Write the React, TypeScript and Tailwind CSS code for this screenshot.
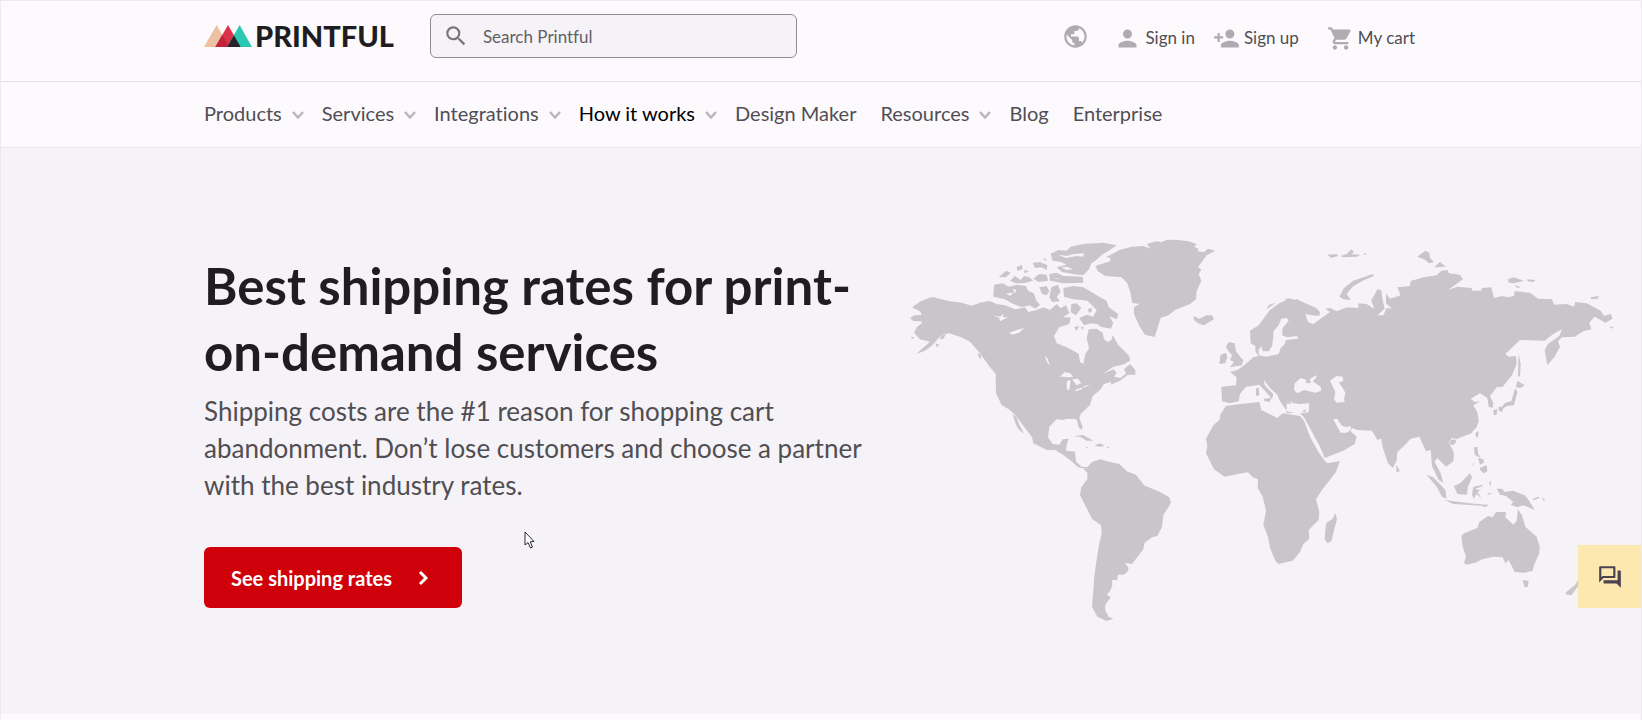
import { useState } from "react";
import {
  MdOutlineQuestionAnswer,
  MdPerson,
  MdPersonAdd,
  MdPublic,
  MdSearch,
  MdShoppingCart,
} from "react-icons/md";

const navItems = [
  { label: "Products", menu: true },
  { label: "Services", menu: true },
  { label: "Integrations", menu: true },
  { label: "How it works", menu: true, active: true },
  { label: "Design Maker", menu: false },
  { label: "Resources", menu: true },
  { label: "Blog", menu: false },
  { label: "Enterprise", menu: false },
];

function Logo() {
  return (
    <a href="#" className="flex items-center gap-[3px] text-[#1f1d21]">
      <svg viewBox="0 0 144 66" className="h-[22px] w-12" aria-hidden="true">
        <path d="M0 66 L38 0 L76 66Z" fill="#ecc0a0" />
        <path d="M34 66 L72 0 L110 66Z" fill="#dc3348" />
        <path d="M34 66 L55 29 L76 66Z" fill="#c4223a" />
        <path d="M69 66 L107 0 L144 66Z" fill="#2bc9b2" />
        <path d="M69 66 L90 31 L110 66Z" fill="#29242b" />
      </svg>
      <span className="text-[29px] leading-8 font-black">PRINTFUL</span>
    </a>
  );
}

function SearchBox() {
  const [query, setQuery] = useState("");

  return (
    <div className="flex h-11 w-[367px] items-center rounded-md border border-[#8f8c92] bg-[#f5f3f7] pl-3">
      <label htmlFor="search">
        <MdSearch className="size-[26px] text-[#77747a]" />
      </label>
      <input
        id="search"
        type="text"
        aria-label="Search Printful"
        placeholder="Search Printful"
        className="ml-[14px] h-full min-w-0 flex-1 bg-transparent text-[17px] text-[#4c4a4f] outline-none placeholder:text-[#626065]"
        value={query}
        onChange={(e) => setQuery(e.target.value)}
      />
    </div>
  );
}

function AccountLinks() {
  return (
    <div className="mr-[23px] flex items-center text-[17px] text-[#504e53]">
      <button type="button" aria-label="Language" className="mr-[25px] mb-1">
        <MdPublic className="size-[27px] text-[#aeacb0]" />
      </button>
      <a href="#" className="mr-[18px] flex items-center gap-1">
        <MdPerson className="size-[27px] text-[#aeacb0]" />
        Sign in
      </a>
      <a href="#" className="mr-[28px] flex items-center gap-1">
        <MdPersonAdd className="size-[27px] text-[#aeacb0]" />
        Sign up
      </a>
      <a href="#" className="flex items-center gap-1">
        <MdShoppingCart className="size-[27px] text-[#aeacb0]" />
        My cart
      </a>
    </div>
  );
}

function WorldMap() {
  return (
    <svg
      viewBox="0 0 2160 1200"
      className="w-full"
      fill="#c8c6ca"
      role="img"
      aria-label="World map"
    >
      {/* North America */}
      <g>
        <path d="M88 203 L100 201 L120 207 L150 214 L185 218 L215 227 L240 218 L268 213 L290 222 L315 226 L345 238 L375 232 L385 246 L410 240 L430 232 L450 240 L470 222 L482 235 L498 225 L508 250 L488 262 L512 262 L508 282 L478 292 L462 318 L470 340 L500 352 L520 362 L536 372 L540 396 L550 402 L556 372 L567 355 L560 325 L566 298 L590 296 L608 308 L612 328 L624 336 L634 330 L638 316 L655 345 L688 378 L690 392 L672 403 L640 410 L608 432 L640 418 L650 428 L642 440 L662 444 L678 430 L672 418 L690 402 L706 420 L706 434 L684 434 L660 452 L632 464 L634 456 L612 462 L600 480 L578 498 L570 525 L542 552 L538 565 L548 590 L544 600 L536 592 L530 568 L500 566 L490 570 L470 568 L448 590 L444 622 L458 642 L478 644 L488 628 L506 626 L500 645 L498 662 L525 665 L528 695 L545 710 L562 712 L575 700 L600 690 L580 720 L556 716 L535 712 L510 690 L490 675 L465 660 L440 660 L400 640 L396 622 L350 560 L330 540 L305 525 L288 490 L287 432 L265 405 L240 370 L210 335 L180 320 L148 310 L130 312 L112 328 L95 348 L75 362 L48 372 L90 335 L60 328 L42 308 L50 292 L66 280 L64 274 L40 273 L30 265 L42 256 L64 255 L62 245 L36 232 L60 215Z" />
        <path d="M338 553 L350 562 L358 584 L373 612 L354 596 L346 578Z M264 402 L284 408 L298 428 L284 424Z M234 368 L244 376 L242 388 L236 380Z M106 340 L118 344 L110 352Z M32 320 L44 322 L36 327Z M128 314 L138 312 L130 326 L118 328Z" />
        <path d="M282 164 L308 160 L326 170 L350 164 L378 168 L384 182 L402 190 L408 210 L420 225 L406 236 L388 226 L366 232 L340 222 L314 208 L280 200Z" />
        <path d="M296 142 L318 122 L332 128 L318 142Z M330 152 L345 138 L362 150 L372 138 L388 142 L400 152 L372 160 L348 160Z M350 112 L366 104 L368 118 L352 122Z M398 98 L420 96 L442 106 L440 120 L425 112 L405 114Z M418 132 L440 134 L444 152 L416 156 L400 146Z M428 84 L440 88 L436 93Z M372 120 L388 124 L374 130Z" />
        <path d="M418 172 L440 168 L448 184 L440 196 L426 192Z M454 172 L474 164 L482 186 L470 200 L480 214 L456 216 L448 200Z" />
        <path d="M452 72 L475 60 L500 62 L512 50 L550 42 L610 38 L650 46 L630 60 L606 74 L584 94 L574 100 L568 116 L550 136 L520 132 L486 126 L470 112 L500 104 L484 96 L458 92Z" />
        <path d="M448 132 L470 128 L490 138 L548 140 L550 158 L490 160 L450 152Z" />
        <path d="M490 174 L520 168 L550 172 L578 188 L600 202 L620 212 L626 232 L655 252 L650 268 L628 258 L640 280 L632 296 L602 290 L576 266 L590 240 L562 212 L520 208 L492 200Z" />
        <path d="M514 222 L530 220 L544 234 L528 256 L512 246Z M564 236 L576 234 L574 246 L566 248Z M538 264 L560 254 L584 262 L600 284 L576 280 L552 286Z M522 292 L538 288 L530 302Z M542 290 L552 292 L548 300Z" />
        <path d="M522 620 L548 614 L580 632 L560 632 L540 620Z M584 646 L600 640 L614 648 L596 650Z M556 650 L566 652 L560 655Z M620 650 L630 652 L622 655Z" />
        <g fill="#f5f3f7">
          <path d="M280 256 L300 260 L312 250 L308 262 L324 262 L300 274 L298 264Z M328 308 L350 300 L372 294 L358 308 L336 314Z M434 378 L442 384 L450 408 L442 398Z" />
          <path d="M480 440 L494 426 L510 430 L520 440 L504 442 L492 440Z M504 450 L512 452 L508 480 L500 478 L500 460Z M516 448 L534 446 L544 460 L530 466Z M524 480 L548 472 L546 478 L528 484Z M546 470 L570 464 L556 472Z" />
          <path d="M474 74 L500 78 L520 72 L552 70 L550 80 L530 78 L498 84Z M484 112 L500 110 L520 118 L500 120Z M460 144 L480 146 L474 148Z M338 176 L350 180 L344 190Z M318 190 L340 188 L330 198Z" />
        </g>
      </g>

      {/* Greenland, Iceland */}
      <g transform="translate(480 0)">
        <path d="M106 108 L150 94 L152 84 L138 82 L178 60 L215 50 L250 48 L272 56 L260 42 L290 34 L304 37 L320 30 L345 29 L382 33 L410 42 L402 50 L416 56 L412 64 L432 66 L444 56 L466 62 L440 76 L424 98 L414 110 L424 120 L416 132 L424 152 L410 184 L408 208 L390 222 L345 240 L326 256 L302 264 L284 321 L255 314 L238 288 L222 252 L222 232 L238 222 L216 218 L212 190 L202 160 L185 142 L136 138 L114 124Z" />
        <path d="M400 258 L418 266 L440 256 L456 256 L462 268 L432 286 L414 280 L402 270Z" />
      </g>

      {/* South America */}
      <path
        transform="translate(480 510)"
        d="M80 205 L95 187 L120 178 L150 186 L178 192 L200 214 L228 224 L252 256 L300 276 L328 292 L333 308 L310 346 L306 380 L292 408 L276 412 L254 428 L250 448 L216 492 L194 488 L206 504 L202 516 L190 524 L174 524 L172 540 L156 540 L157 556 L150 574 L140 584 L152 592 L136 614 L136 632 L146 650 L160 656 L140 663 L112 650 L96 620 L104 520 L116 440 L125 400 L123 376 L96 356 L60 286 L64 262 L82 238 L82 218 L70 206Z"
      />

      {/* Africa, Madagascar */}
      <g transform="translate(870 480)">
        <path d="M92 72 L108 48 L150 42 L208 36 L214 60 L262 84 L278 70 L330 78 L342 92 L360 140 L384 184 L404 212 L412 220 L450 213 L438 246 L396 300 L378 328 L388 366 L386 390 L356 420 L358 446 L340 462 L330 486 L308 512 L266 522 L256 512 L240 474 L234 440 L220 404 L228 362 L218 320 L203 294 L204 268 L188 262 L174 247 L140 253 L104 260 L72 238 L48 190 L52 168 L48 146 L70 106 L88 90Z" />
        <path d="M436 370 L441 386 L424 454 L412 460 L404 446 L408 400 L428 386Z" />
      </g>

      {/* Europe and western Russia */}
      <g transform="translate(870 30)">
        <path d="M94 440 L138 436 L140 412 L120 396 L142 390 L160 378 L190 352 L205 348 L196 334 L196 318 L182 310 L180 272 L206 256 L240 210 L270 188 L300 176 L330 182 L378 204 L390 216 L388 228 L366 226 L346 222 L354 246 L370 252 L400 230 L420 216 L406 206 L420 204 L440 214 L470 202 L505 204 L505 190 L530 192 L552 206 L544 180 L556 160 L562 148 L574 150 L578 180 L584 206 L562 226 L580 226 L590 204 L606 206 L588 190 L588 160 L600 176 L632 166 L622 142 L660 138 L664 122 L690 116 L690 560 L470 540 L340 520 L356 516 L358 490 L330 492 L310 490 L300 482 L304 492 L290 490 L290 512 L268 480 L262 464 L240 444 L222 420 L224 436 L250 462 L246 478 L230 458 L208 434 L168 440 L150 462 L146 484 L120 490 L96 484Z" />
        <path d="M116 306 L134 310 L138 334 L152 352 L160 360 L156 376 L120 382 L132 366 L120 360 L126 346 L114 332 L108 320Z M92 344 L108 338 L112 350 L106 370 L88 372Z M222 476 L244 474 L238 486 L222 482Z M198 446 L206 442 L208 466 L198 468Z M286 514 L314 518 L290 520Z M336 514 L350 508 L344 518Z" />
        <path d="M448 170 L462 144 L490 122 L548 102 L552 108 L518 122 L488 140 L470 162 L482 180 L460 178Z" />
        <path d="M412 44 L440 42 L444 48 L424 54Z M452 48 L470 42 L484 28 L492 36 L484 42 L510 44 L502 50 L460 52Z M520 42 L530 38 L526 46Z M228 206 L238 194 L256 188 L236 204Z M284 178 L302 174 L292 184Z M306 182 L324 176 L326 188 L312 188Z" />
        <g fill="#f5f3f7">
          <path d="M274 236 L290 234 L296 242 L278 264 L276 286 L292 292 L322 288 L324 296 L288 300 L284 312 L272 324 L266 342 L230 350 L206 346 L206 330 L214 318 L218 334 L236 334 L246 318 L250 292 L250 274 L266 256Z" />
          <path d="M312 450 L314 430 L332 414 L350 420 L346 428 L362 430 L360 416 L378 406 L380 412 L368 424 L392 440 L394 452 L376 458 L342 450 L322 460Z" />
          <path d="M420 422 L440 408 L458 410 L460 422 L446 428 L456 440 L466 458 L462 478 L464 486 L440 488 L432 478 L436 456Z" />
        </g>
      </g>

      {/* Siberia and the Far East */}
      <g transform="translate(1440 30)">
        <path d="M60 160 L70 144 L90 140 L92 124 L130 112 L170 106 L184 92 L204 90 L206 100 L240 104 L249 118 L204 150 L232 140 L274 144 L278 152 L304 152 L306 144 L334 142 L342 174 L366 168 L384 172 L402 168 L404 154 L450 158 L474 176 L516 178 L522 194 L560 192 L582 200 L586 186 L620 190 L662 212 L672 228 L692 222 L698 236 L676 248 L644 230 L628 248 L634 268 L610 274 L584 290 L546 292 L534 304 L540 320 L524 350 L502 376 L494 330 L504 312 L538 288 L546 268 L520 282 L494 302 L420 300 L376 342 L386 350 L408 348 L410 372 L396 406 L368 440 L350 442 L330 468 L340 490 L338 504 L326 500 L322 474 L300 460 L272 476 L284 486 L300 484 L280 496 L292 516 L296 544 L274 580 L230 596 L150 565 L60 555Z" />
        <path d="M112 50 L136 32 L148 38 L150 54 L162 66 L148 70 L132 58Z M162 82 L180 66 L198 80Z M384 118 L400 112 L432 122 L402 130 L386 128Z M440 118 L466 120 L460 126 L444 124Z M404 134 L422 142 L412 144Z M632 172 L656 168 L654 176 L634 178Z M686 260 L700 260 L700 266Z" />
        <path d="M416 340 L422 372 L420 408 L414 410Z M412 422 L434 436 L422 444 L408 442Z M406 444 L412 456 L402 496 L380 498 L360 512 L362 504 L376 488 L394 484 L400 462Z M340 510 L352 508 L350 524 L342 526Z M356 500 L372 500 L366 516 L356 512Z M286 580 L296 572 L294 592 L288 590Z" />
      </g>

      {/* South and south-east Asia */}
      <g transform="translate(1260 420)">
        <path d="M-60 130 L465 130 L476 152 L470 172 L452 190 L410 206 L398 204 L386 214 L402 250 L400 274 L378 290 L352 264 L344 276 L362 310 L370 338 L356 330 L336 288 L332 240 L318 244 L298 200 L272 206 L250 230 L232 246 L230 272 L218 294 L204 280 L188 232 L184 206 L172 210 L156 182 L112 180 L96 174 L92 184 L110 200 L104 222 L70 242 L14 264 L0 230 L-48 142Z" />
        <path d="M228 284 L240 302 L230 308Z M388 212 L404 208 L410 214 L400 226 L390 222Z M320 314 L340 322 L376 360 L380 386 L366 380 L350 350Z M374 390 L400 394 L450 400 L500 404 L496 408 L400 402Z M402 348 L420 340 L450 310 L456 322 L444 350 L440 374 L412 372Z" />
        <path d="M460 350 L490 344 L484 350 L466 356 L482 362 L472 366 L484 384 L468 372 L462 386 L456 374Z M462 232 L472 230 L474 250 L482 264 L464 254Z M474 264 L490 268 L492 278 L480 284Z M480 294 L500 286 L502 304 L492 310 L480 300Z M464 276 L452 294 L458 282Z M508 336 L514 334 L510 352Z M502 370 L520 370 L504 374Z" />
        <path
          d="M40 148 L52 146 L64 166 L78 172 L92 168 L92 180 L80 188 L62 188 L52 170Z"
          fill="#f5f3f7"
        />
      </g>

      {/* Oceania */}
      <g transform="translate(1470 510)">
        <path d="M214 408 L222 400 L262 384 L268 366 L294 348 L308 352 L318 336 L348 336 L346 352 L370 374 L380 362 L384 328 L396 346 L406 380 L440 410 L449 440 L448 460 L432 496 L428 512 L404 518 L374 516 L364 496 L356 480 L346 490 L338 472 L310 470 L276 478 L256 488 L228 494 L222 488 L228 470 L218 440Z" />
        <path d="M398 540 L416 542 L414 560 L404 562Z M526 578 L556 554 L568 534 L580 540 L560 564 L544 586 L530 584Z M320 266 L338 266 L342 276 L370 272 L404 286 L416 300 L434 330 L400 316 L382 322 L362 314 L370 306 L348 288 L330 284Z M426 298 L446 290 L448 294 L432 300Z M456 292 L466 300 L460 302Z M276 320 L296 312 L290 320Z" />
      </g>
    </svg>
  );
}

function Cursor() {
  return (
    <svg
      viewBox="0 0 12 18"
      className="absolute top-[383px] left-[523px] h-[18px] w-3"
      aria-hidden="true"
    >
      <path
        d="M1 1 L1 14 L4 11.5 L6.5 17 L8.5 16 L6.2 10.8 L10 10.5Z"
        fill="white"
        stroke="#2b292d"
      />
    </svg>
  );
}

export default function App() {
  return (
    <div className="min-h-screen border-x border-t border-[#eceaee] bg-[#fdfafe] font-[Lato,'Open_Sans',sans-serif] [font-variant-ligatures:none]">
      <header>
        <div className="border-b border-[#e3e1e5]">
          <div className="mx-auto flex h-20 max-w-[1234px] items-start pt-[13px]">
            <div className="mr-9 flex h-11 items-center">
              <Logo />
            </div>
            <SearchBox />
            <div className="ml-auto flex h-12 items-center">
              <AccountLinks />
            </div>
          </div>
        </div>
        <nav className="border-b border-[#e8e6ea]">
          <ul className="mx-auto flex h-[65px] max-w-[1234px] items-center pb-1 text-[20px] text-[#504e53]">
            {navItems.map((item) => (
              <li key={item.label} className={item.menu ? "mr-[18px]" : "mr-6"}>
                <a
                  href="#"
                  className={
                    item.active
                      ? "flex items-center gap-[10px] text-black"
                      : "flex items-center gap-[10px]"
                  }
                >
                  {item.label}
                  {item.menu && (
                    <svg viewBox="0 0 12 8" className="mt-1 h-2 w-3" fill="none">
                      <path d="M1 1 L6 6.5 L11 1" stroke="#b9b7bb" strokeWidth="2.5" />
                    </svg>
                  )}
                </a>
              </li>
            ))}
          </ul>
        </nav>
      </header>

      <main className="relative flex items-start bg-[#f5f3f7] pt-[82px] pr-[21px] pb-[84px] pl-[max(1rem,calc((100%-1234px)/2))]">
        <section className="w-[696px] shrink-0 pt-[23px]">
          <h1 className="max-w-[680px] text-[51px] leading-[66px] font-bold text-[#1f1d21]">
            Best shipping rates for print-on-demand services
          </h1>
          <p className="mt-2 max-w-[680px] text-[26px] leading-[37px] text-[#504e53]">
            Shipping costs are the #1 reason for shopping cart abandonment.
            Don’t lose customers and choose a partner with the best industry
            rates.
          </p>
          <a
            href="#"
            className="mt-[43px] inline-flex h-[61px] w-[258px] items-center rounded-md bg-[#d0000a] pl-[27px] text-[20px] font-bold text-white"
          >
            See shipping rates
            <svg viewBox="0 0 10 14" className="ml-[26px] h-[14px] w-[10px]" fill="none">
              <path d="M2 1 L8 7 L2 13" stroke="white" strokeWidth="3" />
            </svg>
          </a>
        </section>
        <div className="min-w-0 flex-1">
          <WorldMap />
        </div>
        <Cursor />
      </main>

      <button
        type="button"
        aria-label="Chat"
        className="fixed right-px bottom-28 flex size-[63px] items-center justify-center bg-[#fde8b0]"
      >
        <MdOutlineQuestionAnswer className="size-[26px] text-[#4c4350]" />
      </button>
    </div>
  );
}
